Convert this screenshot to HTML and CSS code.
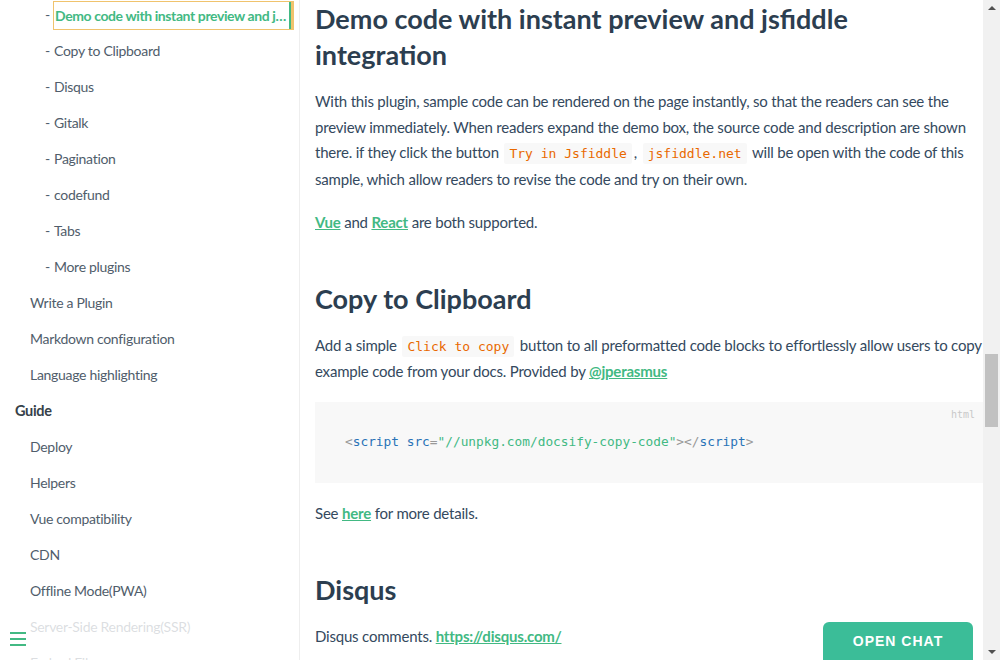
FILE: index.html
```html
<!DOCTYPE html>
<html lang="en">
<head>
<meta charset="utf-8">
<title>docsify plugins</title>
<link rel="stylesheet" href="styles.css">
</head>
<body>
<aside class="sidebar">
  <ul class="nav">
    <li class="sub active"><span class="dash">-</span><a class="cur">Demo code with instant preview and jsfiddle integration</a></li>
    <li class="sub"><span class="dash">-</span><a>Copy to Clipboard</a></li>
    <li class="sub"><span class="dash">-</span><a>Disqus</a></li>
    <li class="sub"><span class="dash">-</span><a>Gitalk</a></li>
    <li class="sub"><span class="dash">-</span><a>Pagination</a></li>
    <li class="sub"><span class="dash">-</span><a>codefund</a></li>
    <li class="sub"><span class="dash">-</span><a>Tabs</a></li>
    <li class="sub"><span class="dash">-</span><a>More plugins</a></li>
    <li class="item"><a>Write a Plugin</a></li>
    <li class="item"><a>Markdown configuration</a></li>
    <li class="item"><a>Language highlighting</a></li>
    <li class="group">Guide</li>
    <li class="item"><a>Deploy</a></li>
    <li class="item"><a>Helpers</a></li>
    <li class="item"><a>Vue compatibility</a></li>
    <li class="item"><a>CDN</a></li>
    <li class="item"><a>Offline Mode(PWA)</a></li>
    <li class="item"><a>Server-Side Rendering(SSR)</a></li>
    <li class="item"><a>Embed Files</a></li>
  </ul>
  <div class="toggle">
    <span class="burger"><i></i><i></i><i></i></span>
  </div>
</aside>
<main class="content">
  <section class="markdown">
    <h2 class="first">Demo code with instant preview and jsfiddle integration</h2>
    <p>With this plugin, sample code can be rendered on the page instantly, so that the readers can see the preview immediately. When readers expand the demo box, the source code and description are shown there. if they click the button <code>Try in Jsfiddle</code>, <code>jsfiddle.net</code> will be open with the code of this sample, which allow readers to revise the code and try on their own.</p>
    <p><a href="#">Vue</a> and <a href="#">React</a> are both supported.</p>
    <h2>Copy to Clipboard</h2>
    <p>Add a simple <code>Click to copy</code> button to all preformatted code blocks to effortlessly allow users to copy example code from your docs. Provided by <a href="#">@jperasmus</a></p>
    <pre class="block"><span class="lang">html</span><code><span class="pn">&lt;</span><span class="tg">script</span> <span class="at">src</span><span class="pn">=</span><span class="st">"//unpkg.com/docsify-copy-code"</span><span class="pn">&gt;&lt;/</span><span class="tg">script</span><span class="pn">&gt;</span></code></pre>
    <p>See <a href="#">here</a> for more details.</p>
    <h2>Disqus</h2>
    <p>Disqus comments. <a href="#">https://disqus.com/</a></p>
  </section>
</main>
<div class="scrollbar">
  <div class="arrow up"></div>
  <div class="track"><div class="thumb"></div></div>
  <div class="arrow down"></div>
</div>
<button class="chat">OPEN CHAT</button>
</body>
</html>
```

FILE: styles.css
```css
html, body {
  margin: 0;
  padding: 0;
}
body {
  width: 1000px;
  height: 660px;
  overflow: hidden;
  display: flex;
  font-family: Lato, "Open Sans", sans-serif;
  color: #34495e;
  background: #fff;
  position: relative;
}
.sidebar {
  width: 299px;
  flex: none;
  border-right: 1px solid #eee;
  position: relative;
  overflow: hidden;
}
.nav {
  list-style: none;
  margin: -3px 0 0 0;
  padding: 0;
  font-size: 14px;
  letter-spacing: -0.3px;
  color: #505d6b;
}
.nav li {
  height: 36px;
  line-height: 36px;
  margin: 0;
  white-space: nowrap;
}
.nav li.sub {
  display: flex;
  padding-left: 45px;
}
.nav .dash {
  width: 9px;
  flex: none;
}
.nav li.item {
  padding-left: 30px;
}
.nav li.group {
  padding-left: 15px;
  font-weight: bold;
  color: #364149;
  font-size: 14.5px;
}
.nav a.cur {
  display: block;
  width: 236px;
  margin: 4px 0 0 -1px;
  height: 27px;
  line-height: 27px;
  padding-left: 1px;
  border: 1px solid #f0c36d;
  border-right: 3px solid #f0c36d;
  box-shadow: inset -2px 0 0 #42b983;
  color: #42b983;
  font-weight: bold;
  letter-spacing: -0.4px;
  overflow: hidden;
  text-overflow: ellipsis;
  white-space: nowrap;
}
.toggle {
  position: absolute;
  left: 0;
  bottom: 0;
  width: 284px;
  height: 50px;
  background: rgba(255, 255, 255, 0.8);
}
.burger {
  position: absolute;
  left: 10px;
  top: 22px;
  display: flex;
  flex-direction: column;
  gap: 4px;
}
.burger i {
  display: block;
  width: 16px;
  height: 2px;
  background: #42b983;
}
.content {
  flex: 1;
  min-width: 0;
  overflow: hidden;
  padding-left: 15px;
}
.markdown {
  font-size: 15px;
  letter-spacing: -0.2px;
}
.markdown h2 {
  font-size: 27px;
  line-height: 36px;
  font-weight: 700;
  letter-spacing: 0;
  color: #2c3e50;
  margin: 45px 0 16px;
}
.markdown h2.first {
  margin-top: 1px;
}
.markdown p {
  line-height: 25.6px;
  margin: 0 0 17.6px;
}
.markdown a {
  color: #42b983;
  font-weight: 700;
  text-decoration: underline;
}
.markdown code {
  font-family: "DejaVu Sans Mono", "Liberation Mono", monospace;
  letter-spacing: 0;
}
.markdown p code {
  font-size: 13px;
  color: #e96900;
  background: #f8f8f8;
  border-radius: 2px;
  padding: 3px 5px;
  margin: 0 2px;
}
.block {
  position: relative;
  margin: 0 0 18px;
  background: #f8f8f8;
  padding: 29px 30px 30px;
  line-height: 22px;
  font-size: 12.8px;
  color: #525252;
}
.block .lang {
  position: absolute;
  top: 6px;
  right: 8px;
  font-family: "DejaVu Sans Mono", monospace;
  font-size: 10px;
  line-height: 14px;
  letter-spacing: 0;
  color: #c8c8c8;
}
.pn { color: #999; }
.tg { color: #2973b7; }
.at { color: #2973b7; }
.st { color: #42b983; }
.scrollbar {
  width: 17px;
  flex: none;
  background: #f1f1f1;
  display: flex;
  flex-direction: column;
}
.arrow {
  height: 17px;
  flex: none;
  position: relative;
}
.arrow::after {
  content: "";
  position: absolute;
  left: 5px;
  width: 0;
  height: 0;
  border-left: 4px solid transparent;
  border-right: 4px solid transparent;
}
.arrow.up::after {
  top: 6px;
  border-bottom: 4px solid #505050;
}
.arrow.down::after {
  top: 7px;
  border-top: 4px solid #505050;
}
.track {
  flex: 1;
}
.thumb {
  margin: 337px 2px 0;
  height: 73px;
  background: #c1c1c1;
}
.chat {
  position: absolute;
  left: 823px;
  top: 622px;
  width: 150px;
  height: 50px;
  border: 0;
  border-radius: 6px 6px 0 0;
  background: #3bbd98;
  color: #fff;
  font-family: "Liberation Sans", Arial, sans-serif;
  font-weight: bold;
  font-size: 14px;
  letter-spacing: 1px;
  padding: 0 0 12px;
}
```
